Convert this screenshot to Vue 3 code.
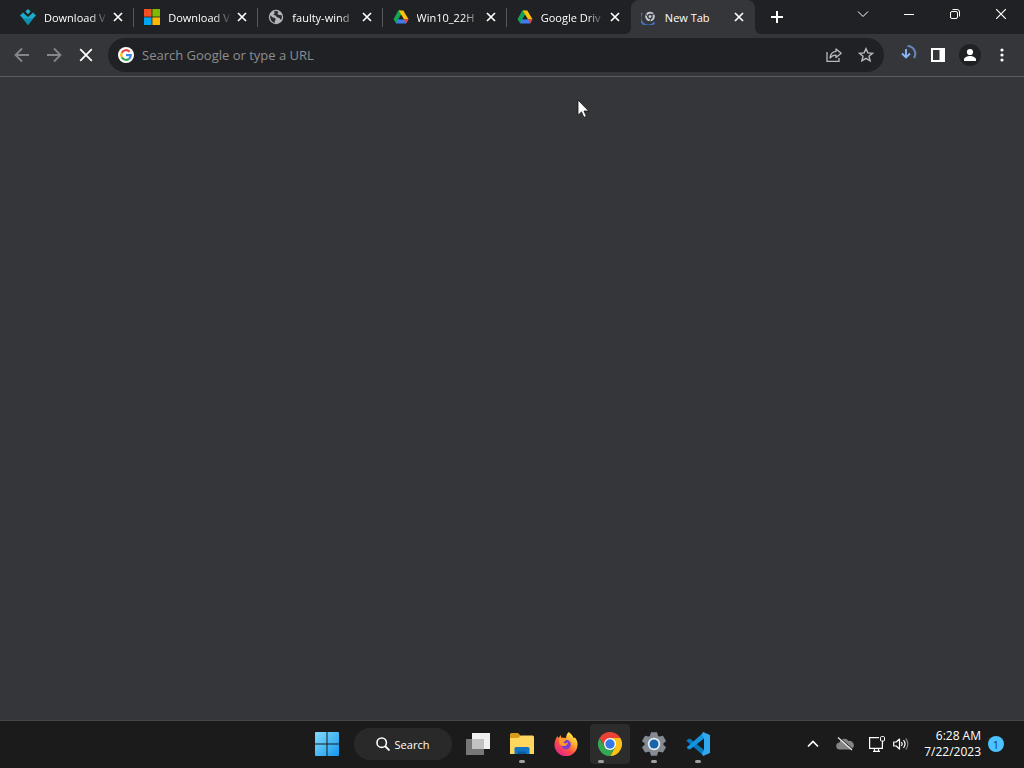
<template>
  <div class="desktop">
    <header class="tab-strip">
      <nav class="tabs" aria-label="Tabs">
        <div
          v-for="(tab, i) in tabs"
          :key="i"
          class="tab"
          :class="{ active: i === activeTab, divided: i < activeTab - 1 }"
        >
          <button class="tab-label" @click="activeTab = i">
            <svg v-if="tab.icon === 'arrow'" class="favicon" viewBox="0 0 16 16">
              <path fill="#22b5d3" d="M8 0l2.6 2.6L8 5.200 5.400 2.600z" />
              <path fill="#1cabc9" d="M3 3.500L8 8l5-4.500 3 3-2.500 2.500L8 16 2.500 9 0 6.500z" />
              <path fill="#0e8fb0" d="M3 9.500h10L8 16z" />
            </svg>
            <svg v-else-if="tab.icon === 'microsoft'" class="favicon" viewBox="0 0 16 16">
              <path fill="#f25022" d="M0 0h7.600v7.600H0z" />
              <path fill="#7fba00" d="M8.400 0H16v7.600H8.400z" />
              <path fill="#00a4ef" d="M0 8.400h7.600V16H0z" />
              <path fill="#ffb900" d="M8.400 8.400H16V16H8.400z" />
            </svg>
            <svg v-else-if="tab.icon === 'globe'" class="favicon" viewBox="0 0 16 16">
              <circle cx="8" cy="8" r="7.200" fill="#b4b7ba" />
              <path fill="#2a2b2e" d="M2.200 6.200l2.600 2.400 2.400.4.400 2-1 1.200.6 1.600C4 13.500 1.800 10.500 2.200 6.200z" />
              <path fill="#2a2b2e" d="M6 2.400c1.600-.6 3.400-.4 4.600.4L9.400 4.200l1 1.600 3.300.4c.5 2 0 3.600-.8 4.800L11.400 9 9 8.200 7.600 6.400 5.400 5.800 6.800 4z" />
            </svg>
            <svg v-else-if="tab.icon === 'drive'" class="favicon" viewBox="0 0 16 16">
              <path fill="#14a454" d="M5.300 1.500h2.700l1.800 3L3.200 14.500.5 10.200z" />
              <path fill="#ffc107" d="M5.800 1.500h4.500l5.200 8.700h-4.700z" />
              <path fill="#3d7df0" d="M5.200 10.200h10.300L13 14.500H3z" />
              <path fill="#ea4335" d="M10.800 10.200h4.700L13 14.500z" />
              <path fill="#202124" d="M8 5.800l2.700 4.500H5.300z" />
            </svg>
            <svg v-else class="favicon" viewBox="0 0 16 16">
              <path fill="none" stroke="#4270cb" stroke-width="2" d="M1 4a7.500 7.500 0 0 0 12.500 9.500" />
              <circle cx="9" cy="7.500" r="4.800" fill="#c4c9d2" />
              <circle cx="9" cy="7.500" r="2.100" fill="#c4c9d2" stroke="#35363a" stroke-width="1.200" />
              <path fill="none" stroke="#35363a" d="M9 5.300h4.400M7.200 8.500L4.800 4.800M10.800 8.500l-2.300 4" />
            </svg>
            <span class="tab-text">{{ tab.title }}</span>
          </button>
          <button class="tab-close" :aria-label="`Close ${tab.title}`">
            <svg width="10" height="10" viewBox="0 0 10 10">
              <path class="line" stroke-width="1.700" d="M1 1l8 8M9 1L1 9" />
            </svg>
          </button>
        </div>
      </nav>
      <button class="new-tab" aria-label="New tab">
        <svg width="12" height="12" viewBox="0 0 12 12">
          <path class="line" stroke-width="2" d="M6 0v12M0 6h12" />
        </svg>
      </button>
      <div class="window-controls">
        <button aria-label="Search tabs">
          <svg width="12" height="12" viewBox="0 0 12 12">
            <path class="line" d="M1 3.500l5 5 5-5" />
          </svg>
        </button>
        <button aria-label="Minimize">
          <svg width="10" height="10" viewBox="0 0 10 10">
            <path class="line" d="M0 5.500h10" />
          </svg>
        </button>
        <button aria-label="Restore">
          <svg width="10" height="10" viewBox="0 0 10 10">
            <rect class="line" x=".5" y="2.500" width="7" height="7" rx="1.500" />
            <path class="line" d="M2.500.5H7A2.500 2.500 0 0 1 9.500 3v4.500" />
          </svg>
        </button>
        <button aria-label="Close">
          <svg width="10" height="10" viewBox="0 0 10 10">
            <path class="line" stroke-width="1.200" d="M0 0l10 10M10 0L0 10" />
          </svg>
        </button>
      </div>
    </header>

    <div class="toolbar">
      <button class="tool dim" aria-label="Back">
        <svg width="16" height="16" viewBox="0 0 16 16">
          <path class="line" stroke-width="1.800" d="M15 8H2M8 1.500L1.500 8 8 14.500" />
        </svg>
      </button>
      <button class="tool dim" aria-label="Forward">
        <svg width="16" height="16" viewBox="0 0 16 16">
          <path class="line" stroke-width="1.800" d="M1 8h13M8 1.500L14.500 8 8 14.500" />
        </svg>
      </button>
      <button class="tool" aria-label="Stop">
        <svg width="14" height="14" viewBox="0 0 14 14">
          <path class="line" stroke-width="1.800" d="M1.200 1.200l11.600 11.600M12.800 1.200L1.200 12.800" />
        </svg>
      </button>
      <form class="omnibox" @submit.prevent>
        <svg width="16" height="16" viewBox="0 0 16 16">
          <circle cx="8" cy="8" r="8" fill="#fff" />
          <g fill="none" stroke-width="2.200">
            <path stroke="#ea4335" d="M3.800 5.700A4.800 4.800 0 0 1 11.500 4.700" />
            <path stroke="#fbbc05" d="M3.800 5.700a4.800 4.800 0 0 0 0 4.600" />
            <path stroke="#34a853" d="M3.800 10.300a4.800 4.800 0 0 0 7.200 1.500" />
            <path stroke="#4285f4" d="M11 11.800A4.800 4.800 0 0 0 12.800 8.100H8" />
          </g>
        </svg>
        <input v-model="query" type="text" aria-label="Address and search bar" placeholder="Search Google or type a URL" />
        <button class="tool soft" type="button" aria-label="Share">
          <svg width="16" height="16" viewBox="0 0 16 16">
            <path class="line" stroke-width="1.300" d="M1 5v9.400h12V11" />
            <path class="line" stroke-width="1.300" stroke-linejoin="round" d="M10 2l5.200 4.300L10 10.600V8.200C7.500 8.100 5.500 9 4 11c.3-3.600 2.400-6.200 6-6.600z" />
          </svg>
        </button>
        <button class="tool soft" type="button" aria-label="Bookmark this tab">
          <svg width="16" height="16" viewBox="0 0 16 16">
            <path class="line" stroke-width="1.400" d="M8 1.700l1.900 4.200 4.600.4-3.500 3 1.100 4.500L8 11.400l-4.100 2.400L5 9.300l-3.500-3 4.600-.4z" />
          </svg>
        </button>
      </form>
      <button class="tool blue" aria-label="Downloads">
        <svg width="18" height="18" viewBox="0 0 18 18">
          <path class="line" stroke-width="1.900" d="M7 4v8.500M3 8.500l4 4 4-4" />
          <path class="line arc" stroke-width="2" d="M8.500 1a7.800 7.800 0 0 1 6.500 12" />
        </svg>
      </button>
      <button class="tool" aria-label="Side panel">
        <svg width="14" height="14" viewBox="0 0 14 14">
          <path fill="currentColor" fill-rule="evenodd" d="M0 0h14v14H0zM2 2v10h6.500V2z" />
        </svg>
      </button>
      <button class="tool" aria-label="Profile">
        <svg width="22" height="22" viewBox="0 0 22 22">
          <circle cx="11" cy="11" r="11" fill="#202124" />
          <circle cx="11" cy="8" r="3.100" fill="currentColor" />
          <path fill="currentColor" d="M5 17v-1.500c0-2.300 3.500-3.500 6-3.500s6 1.200 6 3.500V17z" />
        </svg>
      </button>
      <button class="tool" aria-label="Menu">
        <svg width="4" height="14" viewBox="0 0 4 14">
          <circle cx="2" cy="2" r="1.600" fill="currentColor" />
          <circle cx="2" cy="7" r="1.600" fill="currentColor" />
          <circle cx="2" cy="12" r="1.600" fill="currentColor" />
        </svg>
      </button>
    </div>

    <main class="page">
      <svg class="cursor" width="14" height="20" viewBox="0 0 14 20">
        <path fill="#fff" stroke="#111" stroke-width=".8" d="M1 1v15.200l3.500-3.300 2.400 5.500 2.500-1.100L7 12h4.700z" />
      </svg>
    </main>

    <footer class="taskbar">
      <div class="apps">
        <button class="app" aria-label="Start">
          <svg width="24" height="24" viewBox="0 0 24 24">
            <defs>
              <linearGradient id="start" x1="0" y1="0" x2="24" y2="24" gradientUnits="userSpaceOnUse">
                <stop offset="0" stop-color="#84dcfb" />
                <stop offset="1" stop-color="#1497ef" />
              </linearGradient>
            </defs>
            <path fill="url(#start)" d="M1 0h10.500v11.500H0V1a1 1 0 0 1 1-1zM12.500 0H23a1 1 0 0 1 1 1v10.500H12.500zM0 12.500h11.500V24H1a1 1 0 0 1-1-1zM12.500 12.500H24V23a1 1 0 0 1-1 1H12.500z" />
          </svg>
        </button>
        <button class="search">
          <svg width="14" height="14" viewBox="0 0 14 14">
            <circle class="line" cx="5.700" cy="5.700" r="4.700" stroke-width="1.600" />
            <path class="line" stroke-width="1.800" d="M9 9l4.500 4.500" />
          </svg>
          Search
        </button>
        <button class="app" aria-label="Task view">
          <svg width="26" height="24" viewBox="0 0 26 24">
            <path fill="#f1f1f1" d="M7 1h18v16H7z" />
            <path fill="#777" d="M1 7h18v16H1z" />
            <path fill="#c2c2c2" d="M7 7h12v10H7z" />
          </svg>
        </button>
        <button class="app running" aria-label="File Explorer">
          <svg width="24" height="24" viewBox="0 0 24 24">
            <path fill="#d89b18" d="M0 2.500A1.500 1.500 0 0 1 1.500 1H8l3 3v5H0z" />
            <path fill="#ffd75e" d="M0 6h8l3-2.500h11.500A1.500 1.500 0 0 1 24 5v17H0z" />
            <path fill="#1376c4" d="M4.500 22v-5.500A1.500 1.500 0 0 1 6 15h12a1.500 1.500 0 0 1 1.500 1.500V22z" />
            <path fill="#0b5aa0" d="M8 19.500h8V22H8z" />
          </svg>
        </button>
        <button class="app" aria-label="Firefox">
          <svg width="24" height="24" viewBox="0 0 24 24">
            <defs>
              <linearGradient id="fire" x1="20" y1="2" x2="5" y2="22" gradientUnits="userSpaceOnUse">
                <stop offset="0" stop-color="#fff04a" />
                <stop offset=".35" stop-color="#ffa62e" />
                <stop offset=".65" stop-color="#ff4d46" />
                <stop offset="1" stop-color="#e3258c" />
              </linearGradient>
            </defs>
            <path fill="url(#fire)" d="M14.500 0c3 2 4.500 4 5 6l1.500-.5c2 2.500 2.700 5 2.500 7.500A11.500 11.500 0 0 1 .5 12.500C.6 9 2 6 3.500 4l.7 2.300L7 3v2.500l5 .5c.2-2.500 1-4.500 2.500-6z" />
            <circle cx="12" cy="12.500" r="4.800" fill="#7b3fd0" />
            <path fill="#ff9a2e" d="M5.500 6.500c3-1 5 .2 6.500 2L9 10.800c2 .8 4 .4 5-.8-.2 3.500-3.500 5-7 3.500C5 12 4.600 9 5.500 6.500z" />
          </svg>
        </button>
        <button class="app running focused" aria-label="Google Chrome">
          <svg width="24" height="24" viewBox="0 0 24 24">
            <path fill="#ea4335" d="M1.600 6A12 12 0 0 1 22.400 6H12L6.800 15z" />
            <path fill="#fbc116" d="M22.400 6A12 12 0 0 1 12 24l5.200-9L12 6z" />
            <path fill="#34a853" d="M1.600 6A12 12 0 0 0 12 24l5.200-9H6.800z" />
            <circle cx="12" cy="12" r="6" fill="#fff" />
            <circle cx="12" cy="12" r="4.700" fill="#3478e5" />
          </svg>
        </button>
        <button class="app running" aria-label="Settings">
          <svg width="24" height="24" viewBox="0 0 24 24">
            <path fill="#858b92" stroke="#858b92" stroke-width="1.500" stroke-linejoin="round" d="M9.500 1h5l.8 3.300 2 1.200 3.300-1 2.500 4.400L20.700 11v2.200l2.400 2.200-2.500 4.300-3.300-1-2 1.200-.8 3.100h-5l-.8-3.100-2-1.200-3.300 1L.9 15.400l2.400-2.200V11L.9 8.900l2.500-4.400 3.300 1 2-1.200z" />
            <circle cx="12" cy="12" r="6.200" fill="#e9edf1" />
            <circle cx="12" cy="12" r="4.500" fill="#1764a8" />
          </svg>
        </button>
        <button class="app running" aria-label="Visual Studio Code">
          <svg width="24" height="24" viewBox="0 0 24 24">
            <path fill="#0879bf" d="M1 8.200l1.700-1.500 1.600.1L18 18v6L.8 9.200z" />
            <path fill="#1593df" d="M.8 15.300L18 0v6.500L4.300 17.200l-1.600.1L1 16z" />
            <path fill="#30a8f0" d="M17 0l7 3v18l-7 3-1-2.500 2-3.500V6l-2-3.500z" />
          </svg>
        </button>
      </div>
      <div class="tray">
        <button class="tray-button" aria-label="Show hidden icons">
          <svg width="12" height="12" viewBox="0 0 12 12">
            <path class="line" stroke-width="1.700" d="M1 8.500l5-5 5 5" />
          </svg>
        </button>
        <button class="tray-button" aria-label="OneDrive">
          <svg width="18" height="16" viewBox="0 0 18 16">
            <path fill="#858585" d="M4 13.500a3.500 3.500 0 0 1-.5-7A5 5 0 0 1 12.500 5a4.300 4.300 0 0 1 2 8.500z" />
            <path stroke="#1c1c1c" d="M3 1l14 12.300" />
            <path stroke="#e8e8e8" stroke-width="1.200" d="M2 1.500l14 12.500" />
          </svg>
        </button>
        <button class="quick" aria-label="Network and volume">
          <svg width="16" height="16" viewBox="0 0 16 16">
            <path class="line" stroke-width="1.200" d="M10 1.600H.6v10.800h12.800V7M4 15.400h7M5.500 12.500v3M9.500 12.500v3M13.500 5v3" />
            <rect class="line" x="11.500" y=".6" width="4" height="4.400" rx="1" />
          </svg>
          <svg width="16" height="14" viewBox="0 0 16 14">
            <path class="line" stroke-width="1.200" stroke-linejoin="round" d="M.7 5v4h2.500l3.300 3V2L3.200 5z" />
            <path class="line" stroke-width="1.200" d="M8.500 5a3.400 3.400 0 0 1 0 4M10.500 3.200a6 6 0 0 1 0 7.600" />
            <path class="line" stroke-width="1.200" opacity=".45" d="M12.800 1.500a8.500 8.500 0 0 1 0 11" />
          </svg>
        </button>
        <button class="clock">
          <span>6:28 AM</span>
          <span>7/22/2023</span>
        </button>
        <button class="badge" aria-label="1 notification">1</button>
      </div>
    </footer>
  </div>
</template>

<script setup>
import { ref } from 'vue'

const tabs = [
  { title: 'Download V', icon: 'arrow' },
  { title: 'Download V', icon: 'microsoft' },
  { title: 'faulty-wind', icon: 'globe' },
  { title: 'Win10_22H', icon: 'drive' },
  { title: 'Google Driv', icon: 'drive' },
  { title: 'New Tab', icon: 'loading' }
]

const activeTab = ref(5)
const query = ref('')
</script>

<style>
body {
  background: #35363a;
}
</style>

<style scoped>
.desktop {
  display: flex;
  flex-direction: column;
  min-height: 100vh;
  color: #fff;
  font-family: 'Segoe UI', 'Open Sans', sans-serif;
  font-size: 11px;
}

button {
  display: flex;
  align-items: center;
  justify-content: center;
  padding: 0;
  border: 0;
  background: none;
  color: inherit;
  font: inherit;
}

svg {
  flex: none;
}

.line {
  fill: none;
  stroke: currentColor;
}

.tab-strip {
  display: flex;
  height: 34px;
  padding-left: 10px;
  background: #202124;
}

.tabs {
  display: flex;
  flex: 0 1 745px;
  min-width: 0;
}

.tab {
  position: relative;
  display: flex;
  flex: 1;
  align-items: center;
  min-width: 0;
  padding: 0 8px 0 10px;
}

.tab.divided::after {
  content: '';
  position: absolute;
  right: 0;
  top: 8px;
  width: 1px;
  height: 19px;
  background: #55575b;
}

.tab.active {
  border-radius: 8px 8px 0 0;
  background: #35363a;
}

/* curved feet of the selected tab */
.tab.active::before,
.tab.active::after {
  content: '';
  position: absolute;
  bottom: 0;
  width: 6px;
  height: 6px;
}

.tab.active::before {
  right: 100%;
  background: radial-gradient(circle at 0 0, transparent 6px, #35363a 6px);
}

.tab.active::after {
  left: 100%;
  background: radial-gradient(circle at 100% 0, transparent 6px, #35363a 6px);
}

.tab-label {
  flex: 1;
  justify-content: flex-start;
  min-width: 0;
  gap: 8px;
  height: 34px;
}

.favicon {
  width: 16px;
  height: 16px;
}

.tab-text {
  flex: 1;
  overflow: hidden;
  white-space: nowrap;
  text-align: left;
  mask-image: linear-gradient(to right, #000 72%, transparent);
}

.tab.active .tab-text {
  mask-image: none;
}

.tab-close {
  width: 16px;
  height: 16px;
  margin-left: 2px;
}

.new-tab {
  width: 28px;
  margin-left: 8px;
}

.window-controls {
  display: flex;
  height: 28px;
  margin-left: auto;
}

.window-controls button {
  width: 46px;
}

.toolbar {
  display: flex;
  align-items: center;
  height: 42px;
  padding: 0 6px;
  border-bottom: 1px solid #5b5c60;
}

.tool {
  width: 32px;
  height: 32px;
}

.dim {
  color: #85868a;
}

.soft {
  color: #b9babd;
}

.blue {
  padding: 0 0 2px 4px;
  color: #8ab4f8;
}

.arc {
  stroke: #6688bd;
}

.omnibox {
  display: flex;
  flex: 1;
  align-items: center;
  height: 34px;
  margin: 0 6px;
  padding: 0 2px 0 10px;
  border-radius: 17px;
  background: #202124;
}

.omnibox input {
  flex: 1;
  min-width: 0;
  padding: 0 8px;
  border: 0;
  outline: 0;
  background: none;
  color: #fff;
  font: inherit;
  font-size: 13px;
}

.omnibox input::placeholder {
  color: #8d8e91;
  opacity: 1;
}

.page {
  position: relative;
  flex: 1;
  background: #35363a;
}

.cursor {
  position: absolute;
  left: 577px;
  top: 22px;
}

.taskbar {
  display: grid;
  grid-template-columns: 1fr auto 1fr;
  align-items: center;
  height: 46px;
  padding-bottom: 1px;
  border-top: 1px solid #46474a;
  background: #1b1b1b;
}

.apps {
  display: flex;
  grid-column: 2;
  gap: 4px;
}

.app {
  position: relative;
  width: 40px;
  height: 40px;
  border-radius: 4px;
}

.app.running::after {
  content: '';
  position: absolute;
  bottom: 1px;
  left: 17px;
  width: 6px;
  height: 3px;
  border-radius: 2px;
  background: #a0a0a0;
}

.app.running.focused {
  background: #2c2c2c;
}

.app.running.focused::after {
  left: 8px;
}

.search {
  gap: 5px;
  width: 98px;
  height: 32px;
  margin: 4px 2px 4px 3px;
  border-radius: 16px;
  background: #292929;
}

.tray {
  display: flex;
  align-items: center;
  justify-content: flex-end;
  padding-right: 20px;
}

.tray-button {
  width: 32px;
  height: 40px;
}

.quick {
  gap: 8px;
  height: 40px;
  padding: 0 8px;
}

.clock {
  flex-direction: column;
  align-items: flex-end;
  margin: 0 7px;
  font-size: 12px;
  line-height: 16px;
}

.badge {
  width: 16px;
  height: 16px;
  border-radius: 8px;
  background: #4cc2ff;
  color: #17405a;
}
</style>
